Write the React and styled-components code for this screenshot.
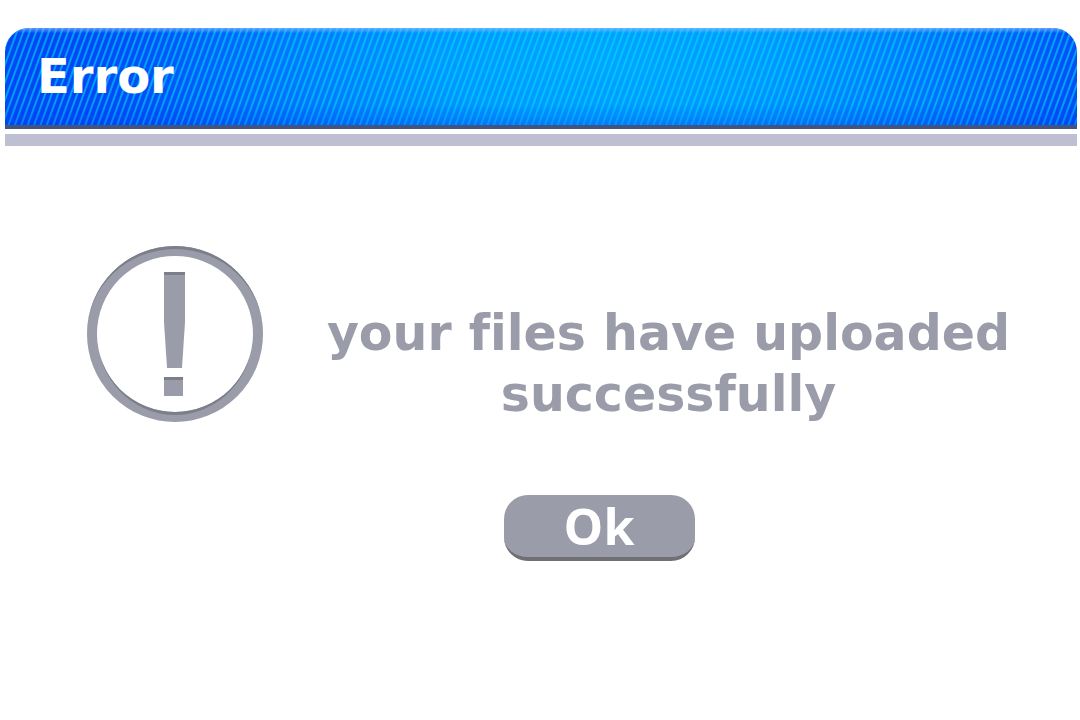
import React from "react";
import styled, { createGlobalStyle } from "styled-components";

const GlobalStyle = createGlobalStyle`
  body {
    margin: 0;
    background-color: #fff;
    font-family: "DejaVu Sans", Verdana, sans-serif;
    font-variant-ligatures: none;
  }
`;

const Dialog = styled.main`
  padding: 28px 3px 0 5px;
`;

const TitleBar = styled.header`
  box-sizing: border-box;
  height: 101px;
  padding: 12px 32px;
  border-bottom: 4px solid #43547f;
  border-radius: 24px 24px 0 0;
  background:
    linear-gradient(rgba(160, 200, 255, 0.6), rgba(120, 180, 255, 0.2) 4px, transparent 5px),
    linear-gradient(transparent 75%, rgba(0, 60, 240, 0.35)),
    repeating-linear-gradient(110deg, rgba(0, 225, 255, 0.55) 0 1px, transparent 2px 5px, rgba(0, 225, 255, 0.55) 6px),
    radial-gradient(ellipse 50% 200% at 56% 30%, #00a4ff, #0098ff 30%, #0074fc 62%, #0050f6 88%, #0048f4);
  background-origin: border-box;
`;

const Title = styled.h1`
  margin: 0;
  color: #fff;
  font-size: 48px;
  line-height: 72px;
  font-weight: 700;
`;

const Divider = styled.div`
  height: 12px;
  margin-top: 5px;
  background-color: #bec0d1;
`;

const Content = styled.section`
  display: flex;
  align-items: flex-start;
  gap: 48px;
  padding: 99px 52px 0 81px;
`;

const AlertIcon = styled.svg`
  flex: none;
  width: 178px;
  height: 178px;
`;

const Message = styled.p`
  flex: 1;
  margin: 0;
  padding-top: 58px;
  color: #9a9ca9;
  font-size: 49px;
  line-height: 61px;
  font-weight: 700;
  text-align: center;
`;

const Actions = styled.footer`
  display: flex;
  justify-content: center;
  padding: 70px 0 0 116px;
`;

const Button = styled.button`
  width: 191px;
  height: 66px;
  padding: 0;
  border: none;
  border-bottom: 4px solid #6f6f74;
  border-radius: 24px;
  background-color: #9a9ca9;
  color: #fff;
  font-family: "Open Sans", "Noto Sans", sans-serif;
  font-size: 50px;
  line-height: 62px;
  font-weight: 700;
  cursor: pointer;
`;

const App = () => {
  return (
    <>
      <GlobalStyle />
      <Dialog>
        <TitleBar>
          <Title>Error</Title>
        </TitleBar>
        <Divider />
        <Content>
          <AlertIcon viewBox="0 0 178 178" aria-hidden="true">
            <circle cx="89" cy="89" r="83" fill="none" stroke="#9a9ca9" strokeWidth="10" />
            <path d="M1 89a88 88 0 0 1 176 0a88 85 0 0 0-176 0z" fill="#7c7e8a" />
            <path d="M11 89a78 78 0 0 0 156 0a78 81 0 0 1-156 0z" fill="#7c7e8a" />
            <path d="M78 27h21v50l-3 46H81l-3-46z" fill="#9a9ca9" />
            <path d="M78 27h21v3H78zM78 132h19v3H78z" fill="#7c7e8a" />
            <path d="M78 135h19v16H78z" fill="#9a9ca9" />
          </AlertIcon>
          <Message>your files have uploaded successfully</Message>
        </Content>
        <Actions>
          <Button type="button">Ok</Button>
        </Actions>
      </Dialog>
    </>
  );
};

export default App;
